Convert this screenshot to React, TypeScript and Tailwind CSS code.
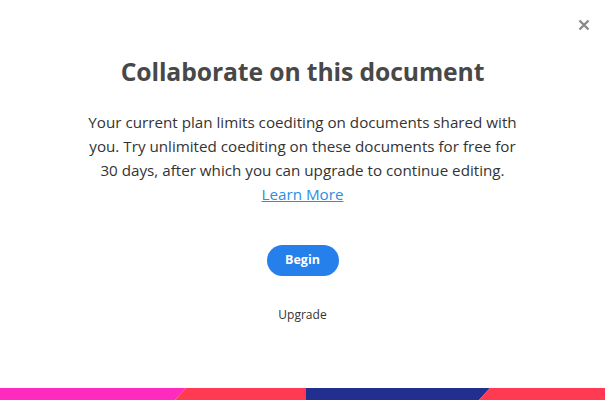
import React from "react";

export default function App() {
  return (
    <div className="relative w-[605px] h-[400px] bg-white overflow-hidden flex flex-col" style={{ fontFamily: '"Open Sans", "Noto Sans", sans-serif' }}>
      <button className="absolute right-[15px] top-[19px] w-[12px] h-[12px] flex items-center justify-center">
        <svg width="12" height="12" viewBox="0 0 12 12">
          <path d="M1.5 1.5 L10.5 10.5 M10.5 1.5 L1.5 10.5" stroke="#8a8a8a" strokeWidth="2.4" strokeLinecap="butt" />
        </svg>
      </button>
      <div className="flex-1 flex flex-col items-center">
        <h1 className="mt-[56px] text-[24.7px] leading-[32px] font-bold text-[#484848] tracking-[-0.1px]">Collaborate on this document</h1>
        <p className="mt-[22px] w-[436px] text-center text-[15.2px] leading-[24px] text-[#333333]">
          Your current plan limits coediting on documents shared with you. Try unlimited coediting on these documents for free for 30 days, after which you can upgrade to continue editing.
          <br />
          <a href="#" className="text-[#2b8ee3] underline">Learn More</a>
        </p>
        <button className="mt-[39px] w-[72px] h-[31px] rounded-full bg-[#2680eb] text-white text-[12.5px] font-bold">Begin</button>
        <div className="mt-[30px] text-[12px] text-[#333333]">Upgrade</div>
      </div>
      <div className="h-[12px] flex">
        <div className="w-[605px] h-[12px] relative">
          <svg width="605" height="12" viewBox="0 0 605 12" className="block">
            <polygon points="0,0 186,0 175,12 0,12" fill="#ff2bbf" />
            <polygon points="186,0 306,0 306,12 175,12" fill="#ff3a52" />
            <polygon points="306,0 490,0 479,12 306,12" fill="#232f8f" />
            <polygon points="490,0 605,0 605,12 479,12" fill="#ff3a52" />
          </svg>
        </div>
      </div>
    </div>
  );
}
